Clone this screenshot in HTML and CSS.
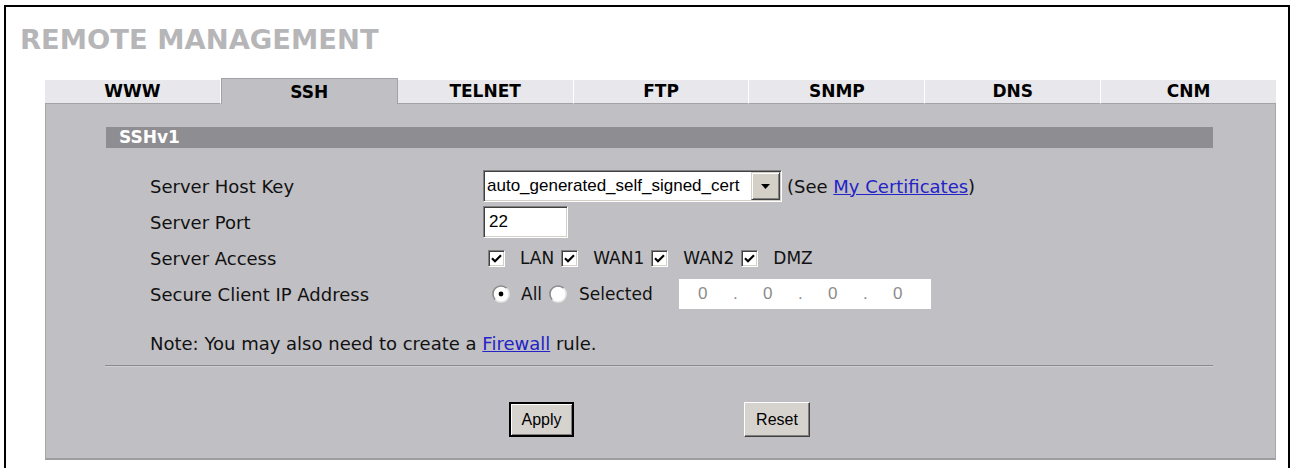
FILE: index.html
```html
<!DOCTYPE html>
<html>
<head>
<meta charset="utf-8">
<title>Remote Management - SSH</title>
<link rel="stylesheet" href="styles.css">
</head>
<body>
<div class="frame">
  <h1 class="title">REMOTE MANAGEMENT</h1>
  <div class="tabs">
    <div class="tab">WWW</div>
    <div class="tab active">SSH</div>
    <div class="tab">TELNET</div>
    <div class="tab">FTP</div>
    <div class="tab">SNMP</div>
    <div class="tab">DNS</div>
    <div class="tab last">CNM</div>
  </div>
  <div class="panel">
    <div class="bar">SSHv1</div>
    <div class="form">
      <div class="label">Server Host Key</div>
      <div class="ctl">
        <div class="select">
          <span class="select-text">auto_generated_self_signed_cert</span>
          <span class="arrow"><svg width="9" height="5" viewBox="0 0 9 5"><polygon points="0,0 9,0 4.5,5" fill="#000"/></svg></span>
        </div>
        <span class="see">(See <a class="link" href="#">My Certificates</a>)</span>
      </div>

      <div class="label">Server Port</div>
      <div class="ctl">
        <div class="text-input">22</div>
      </div>

      <div class="label">Server Access</div>
      <div class="ctl">
        <span class="cb"><svg width="11" height="9" viewBox="0 0 11 9"><path d="M1 4.2 L4 7.2 L10 1.2" fill="none" stroke="#000" stroke-width="2.2"/></svg></span><span class="opt">LAN</span>
        <span class="cb"><svg width="11" height="9" viewBox="0 0 11 9"><path d="M1 4.2 L4 7.2 L10 1.2" fill="none" stroke="#000" stroke-width="2.2"/></svg></span><span class="opt">WAN1</span>
        <span class="cb"><svg width="11" height="9" viewBox="0 0 11 9"><path d="M1 4.2 L4 7.2 L10 1.2" fill="none" stroke="#000" stroke-width="2.2"/></svg></span><span class="opt">WAN2</span>
        <span class="cb"><svg width="11" height="9" viewBox="0 0 11 9"><path d="M1 4.2 L4 7.2 L10 1.2" fill="none" stroke="#000" stroke-width="2.2"/></svg></span><span class="opt">DMZ</span>
      </div>

      <div class="label">Secure Client IP Address</div>
      <div class="ctl">
        <span class="radio first"><svg width="18" height="18" viewBox="0 0 18 18"><circle cx="9" cy="9" r="8" fill="#fff"/><path d="M3.3 14.7 A8 8 0 0 1 14.7 3.3" fill="none" stroke="#8a8a8a" stroke-width="1.6"/><path d="M14.7 3.3 A8 8 0 0 1 3.3 14.7" fill="none" stroke="#e6e6e6" stroke-width="1.6"/><circle cx="9" cy="9" r="2.4" fill="#000"/></svg></span><span class="opt">All</span>
        <span class="radio"><svg width="18" height="18" viewBox="0 0 18 18"><circle cx="9" cy="9" r="8" fill="#fff"/><path d="M3.3 14.7 A8 8 0 0 1 14.7 3.3" fill="none" stroke="#8a8a8a" stroke-width="1.6"/><path d="M14.7 3.3 A8 8 0 0 1 3.3 14.7" fill="none" stroke="#e6e6e6" stroke-width="1.6"/></svg></span><span class="opt sel">Selected</span>
        <div class="ipbox">
          <span class="oct">0</span><span class="dot">.</span><span class="oct">0</span><span class="dot">.</span><span class="oct">0</span><span class="dot">.</span><span class="oct">0</span>
        </div>
      </div>
    </div>
    <p class="note">Note: You may also need to create a <a class="link" href="#">Firewall</a> rule.</p>
    <div class="sep"></div>
    <div class="buttons">
      <button class="btn apply" type="button">Apply</button>
      <button class="btn reset" type="button">Reset</button>
    </div>
  </div>
</div>
</body>
</html>
```

FILE: styles.css
```css
html, body {
  margin: 0;
  padding: 0;
  background: #ffffff;
}

body {
  font-family: "DejaVu Sans", Verdana, sans-serif;
  color: #111;
}

.frame {
  margin: 5px 0 0 4px;
  width: 1282px;
  height: 470px;
  border: 2px solid #000;
  border-bottom: none;
}

.title {
  margin: 0;
  padding: 17px 0 0 14px;
  font-family: "DejaVu Sans", Verdana, sans-serif;
  font-weight: bold;
  font-size: 27.4px;
  line-height: 32px;
  color: #b6b6b8;
  letter-spacing: 0;
}

.tabs {
  display: flex;
  align-items: flex-end;
  margin: 22px 0 0 39px;
  width: 1231px;
  height: 26px;
}

.tab {
  flex: 1 1 0;
  box-sizing: border-box;
  height: 24px;
  line-height: 23px;
  background: #e8e7eb;
  border-right: 1px solid #ffffff;
  border-bottom: 1px solid #a3a3a6;
  text-align: center;
  font-weight: bold;
  font-size: 17px;
  color: #000;
}

.tab.last {
  border-right: none;
}

.tab.active {
  height: 26px;
  line-height: 27px;
  background: #c0bfc3;
  border: 1px solid #a3a3a6;
  border-bottom: none;
}

.panel {
  margin-left: 39px;
  width: 1231px;
  box-sizing: border-box;
  background: #c0bfc3;
  border: 1px solid #a7a7aa;
  border-top: none;
  border-bottom: 2px solid #9d9d9f;
  padding: 23px 0 21px 0;
}

.bar {
  margin: 0 62px 0 60px;
  height: 21px;
  line-height: 21px;
  background: #8e8d91;
  color: #ffffff;
  font-weight: bold;
  font-size: 17px;
  padding-left: 13px;
}

.form {
  display: grid;
  grid-template-columns: 333px 1fr;
  grid-auto-rows: 36px;
  align-items: center;
  margin-top: 20px;
  padding-left: 104px;
}

.label {
  font-size: 18px;
  color: #111;
}

.ctl {
  display: flex;
  align-items: center;
  font-size: 18px;
}

.select {
  width: 299px;
  height: 32px;
  box-sizing: border-box;
  display: flex;
  align-items: center;
  padding: 0 1px 0 3px;
  background: #ffffff;
  border: 1px solid;
  border-color: #808080 #ffffff #ffffff #808080;
  box-shadow: inset 1px 1px 0 #404040, inset -1px -1px 0 #d4d0c8;
  font-family: "Liberation Sans", Arial, sans-serif;
  font-size: 17px;
  color: #000;
}

.select-text {
  flex: 1;
}

.arrow {
  width: 29px;
  height: 28px;
  box-sizing: border-box;
  display: flex;
  align-items: center;
  justify-content: center;
  background: #d4d0c8;
  border: 1px solid;
  border-color: #d4d0c8 #404040 #404040 #d4d0c8;
  box-shadow: inset 1px 1px 0 #ffffff, inset -1px -1px 0 #808080;
}

.see {
  margin-left: 5px;
}

.link {
  color: #2323c8;
  text-decoration: underline;
}

.text-input {
  width: 85px;
  height: 32px;
  box-sizing: border-box;
  padding-left: 5px;
  display: flex;
  align-items: center;
  background: #ffffff;
  border: 1px solid;
  border-color: #808080 #ffffff #ffffff #808080;
  box-shadow: inset 1px 1px 0 #404040, inset -1px -1px 0 #d4d0c8;
  font-family: "Liberation Sans", Arial, sans-serif;
  font-size: 17px;
  color: #000;
}

.cb {
  width: 17px;
  height: 17px;
  box-sizing: border-box;
  display: flex;
  align-items: center;
  justify-content: center;
  background: #ffffff;
  border: 1px solid;
  border-color: #808080 #ffffff #ffffff #808080;
  box-shadow: inset 1px 1px 0 #404040, inset -1px -1px 0 #d4d0c8;
  margin-right: 15px;
}

.ctl .cb:first-child {
  margin-left: 5px;
}

.opt {
  font-size: 17px;
  margin-right: 7px;
}

.radio {
  display: flex;
  width: 18px;
  height: 18px;
  margin-right: 11px;
}

.radio.first {
  margin-left: 9px;
}

.opt.sel {
  margin-left: 1px;
  margin-right: 26px;
}

.ipbox {
  width: 252px;
  height: 30px;
  background: #ffffff;
  display: flex;
  align-items: center;
  padding-left: 0;
  font-family: "Liberation Sans", Arial, sans-serif;
  font-size: 17px;
  color: #8c8c8c;
}

.oct {
  width: 48px;
  text-align: center;
}

.dot {
  width: 17px;
  text-align: center;
}

.note {
  margin: 21px 0 0 104px;
  font-size: 18px;
  line-height: 22px;
  color: #111;
}

.sep {
  margin: 10px 62px 0 59px;
  height: 0;
  border-top: 1px solid #8a8a8c;
  border-bottom: 1px solid #cfcfd1;
}

.buttons {
  display: flex;
  margin: 35px 0 0 463px;
}

.btn {
  height: 35px;
  box-sizing: border-box;
  padding: 0;
  background: #d6d3ce;
  font-family: "Liberation Sans", Arial, sans-serif;
  font-size: 16px;
  color: #000;
  display: flex;
  align-items: center;
  justify-content: center;
}

.btn.apply {
  width: 65px;
  border: 2px solid #000;
  box-shadow: inset 1px 1px 0 #ffffff, inset -1px -1px 0 #808080;
}

.btn.reset {
  width: 66px;
  margin-left: 170px;
  border: 1px solid;
  border-color: #ffffff #404040 #404040 #ffffff;
  box-shadow: inset -1px -1px 0 #808080;
}
```
